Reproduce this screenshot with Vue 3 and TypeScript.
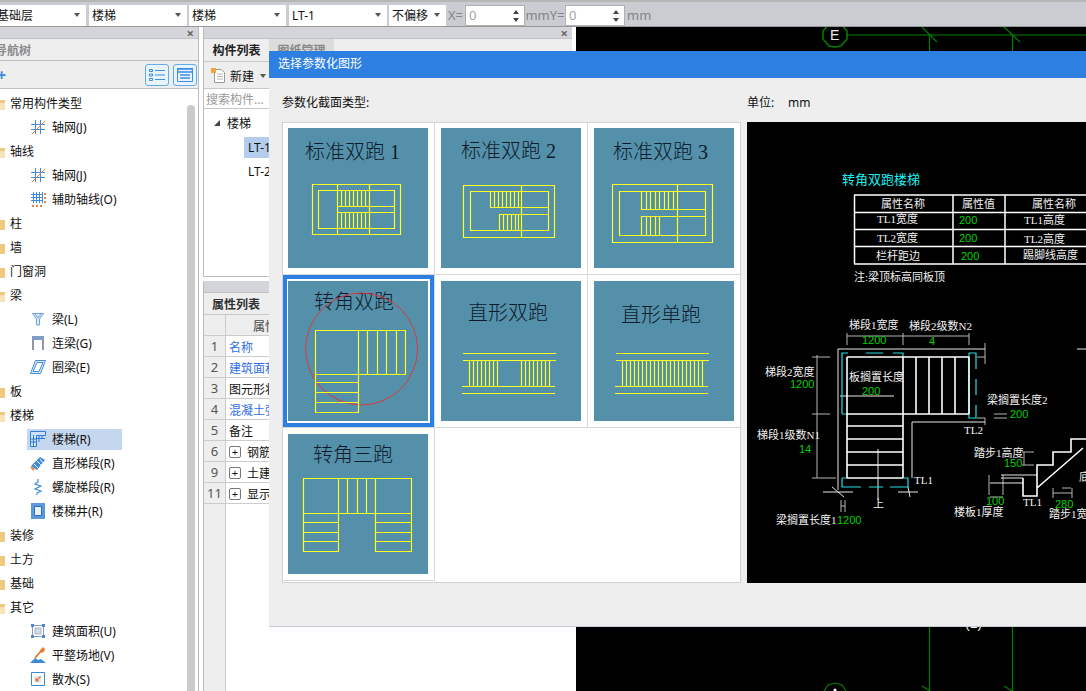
<script setup lang="ts">
interface TreeRow {
  label: string;
  open?: boolean;
  icon?: string;
  active?: boolean;
}

interface PropRow {
  num: number;
  label: string;
  link?: boolean;
  expand?: boolean;
}

interface StairPic {
  title: string;
  x: number;
  y: number;
  d: string;
  circle?: boolean;
}

interface CadText {
  t: string;
  x: number;
  y: number;
  kind?: string;
}

const tree: TreeRow[] = [
  { label: '常用构件类型', open: true },
  { label: '轴网(J)', icon: 'grid' },
  { label: '轴线', open: true },
  { label: '轴网(J)', icon: 'grid' },
  { label: '辅助轴线(O)', icon: 'helper' },
  { label: '柱' },
  { label: '墙' },
  { label: '门窗洞' },
  { label: '梁', open: true },
  { label: '梁(L)', icon: 'beam' },
  { label: '连梁(G)', icon: 'link' },
  { label: '圈梁(E)', icon: 'ring' },
  { label: '板' },
  { label: '楼梯', open: true },
  { label: '楼梯(R)', icon: 'stair', active: true },
  { label: '直形梯段(R)', icon: 'straight' },
  { label: '螺旋梯段(R)', icon: 'spiral' },
  { label: '楼梯井(R)', icon: 'well' },
  { label: '装修' },
  { label: '土方' },
  { label: '基础' },
  { label: '其它', open: true },
  { label: '建筑面积(U)', icon: 'area' },
  { label: '平整场地(V)', icon: 'level' },
  { label: '散水(S)', icon: 'apron' },
];

const props: PropRow[] = [
  { num: 1, label: '名称', link: true },
  { num: 2, label: '建筑面积', link: true },
  { num: 3, label: '图元形状' },
  { num: 4, label: '混凝土强度等级', link: true },
  { num: 5, label: '备注' },
  { num: 6, label: '钢筋业务属性', expand: true },
  { num: 9, label: '土建业务属性', expand: true },
  { num: 11, label: '显示样式', expand: true },
];

const range = (from: number, to: number, step: number) => {
  const out: number[] = [];
  for (let v = from; v <= to + 0.01; v += step) out.push(Math.round(v) + 0.5);
  return out;
};
const vs = (xs: number[], y1: number, y2: number) => xs.map((x) => `M${x} ${y1}V${y2}`).join('');
const hs = (ys: number[], x1: number, x2: number) => ys.map((y) => `M${x1} ${y}H${x2}`).join('');
const box = (x1: number, y1: number, x2: number, y2: number) => `M${x1} ${y1}H${x2}V${y2}H${x1}Z`;

const pics: StairPic[] = [
  {
    title: '标准双跑 1', x: 17, y: 31,
    d: box(24.5, 56.5, 112.5, 106.5) + box(30.5, 62.5, 106.5, 100.5) + vs([49.5, 81.5], 56, 107)
      + hs([78.5, 84.5], 49, 107) + vs(range(53, 78, 4), 62, 79) + vs(range(53, 78, 4), 85, 101),
  },
  {
    title: '标准双跑 2', x: 20, y: 30,
    d: box(22.5, 57.5, 113.5, 109.5) + box(29.5, 63.5, 107.5, 102.5) + vs([80.5], 57, 110)
      + hs([79.5], 49, 107) + hs([86.5], 58, 107) + vs([49.5, 53.5, 57.5, 61.5, 65.5, 69.5, 73.5, 77.5], 63, 80)
      + vs([58.5, 62.5, 66.5, 70.5, 74.5, 77.5], 86, 103),
  },
  {
    title: '标准双跑 3', x: 19, y: 31,
    d: box(18.5, 56.5, 118.5, 114.5) + box(25.5, 63.5, 111.5, 107.5) + vs([83.5], 56, 115)
      + hs([81.5, 88.5], 47, 111) + vs(range(47, 80, 4.5), 63, 82) + vs(range(47, 69, 4.5), 88, 107),
  },
  {
    title: '转角双跑', x: 26, y: 28, circle: true,
    d: box(27.5, 49.5, 117.5, 93.5) + vs([70.5, 79.5, 89.5, 98.5, 108.5], 49, 93)
      + box(27.5, 93.5, 70.5, 131.5) + hs([101.5, 111.5, 121.5], 27, 71),
  },
  {
    title: '直形双跑', x: 27, y: 39,
    d: hs([72.5, 79.5], 22, 115) + hs([105.5, 112.5], 21, 114)
      + vs(range(28, 56, 4), 79, 105) + vs(range(80, 108, 4), 79, 105),
  },
  {
    title: '直形单跑', x: 27, y: 41,
    d: hs([72.5, 79.5], 22, 115) + hs([105.5, 112.5], 21, 114) + vs(range(28, 108, 4), 79, 105),
  },
  {
    title: '转角三跑', x: 25, y: 28,
    d: box(15.5, 44.5, 123.5, 79.5) + vs([50.5, 59.5, 69.5, 78.5, 87.5], 44, 79)
      + box(15.5, 79.5, 50.5, 117.5) + hs([88.5, 98.5, 107.5], 15, 51)
      + box(87.5, 79.5, 123.5, 117.5) + hs([88.5, 98.5, 107.5], 87, 124),
  },
];

const cadWhite = hs([357], 847, 969) + hs([414], 847, 969) + hs([426, 439, 452, 465, 478], 847, 903)
  + vs([847], 357, 478) + vs([903], 357, 478) + vs([916, 929, 942, 955, 969], 357, 414)
  + 'M1023 478V496H1037V465H1053V452H1071V439H1086M1037 488L1083 448';

const cadThin = 'M838 349H985M838 349V490M912 478V422H985M878 449V500M840 396H894'
  + 'M1037 475H1001M1001 478H1023M990 483H1023M1077 349H1086'
  + 'M823 492H853M832 487L844 497M898 492H918M908 487L910 497';

const cadGray = 'M847 336H969M847 333V345M903 333V345M969 333V345'
  + 'M817 355V478M812 357H830M812 414H830M812 478H836'
  + 'M977 357H985M977 418H985M985 343V364M985 418V425M994 414H1007M994 418H1007'
  + 'M989 475V495M1003 475V495M990 497H1003M1062 488H1071M1053 488V498M1072 488V498M1053 493H1072'
  + 'M1022 452H1034M1022 465H1034M1024 452V465M841 500V512M845 500V512M841 506H845';

const cadCyan = 'M842 414V353H848M866 353H883M893 353H903V357M969 353H976V369M976 379V395M976 405V418H969V353'
  + 'M842 414H848M842 478V487H861M869 487H883M890 487H908V478H903M842 478H847';

const cadTexts: CadText[] = [
  { t: '转角双跑楼梯', x: 842, y: 179, kind: 'title' },
  { t: '属性名称', x: 881, y: 204 },
  { t: '属性值', x: 962, y: 204 },
  { t: '属性名称', x: 1032, y: 204 },
  { t: 'TL1宽度', x: 877, y: 219 },
  { t: '200', x: 959, y: 220, kind: 'value' },
  { t: 'TL1高度', x: 1024, y: 220 },
  { t: 'TL2宽度', x: 877, y: 238 },
  { t: '200', x: 959, y: 238, kind: 'value' },
  { t: 'TL2高度', x: 1024, y: 239 },
  { t: '栏杆距边', x: 876, y: 256 },
  { t: '200', x: 961, y: 256, kind: 'value' },
  { t: '踢脚线高度', x: 1023, y: 255 },
  { t: '注:梁顶标高同板顶', x: 854, y: 277 },
  { t: '梯段1宽度', x: 849, y: 325 },
  { t: '梯段2级数N2', x: 909, y: 326 },
  { t: '1200', x: 862, y: 340, kind: 'value' },
  { t: '4', x: 929, y: 341, kind: 'value' },
  { t: '板搁置长度', x: 849, y: 377 },
  { t: '200', x: 862, y: 391, kind: 'value' },
  { t: '梯段2宽度', x: 765, y: 372 },
  { t: '1200', x: 790, y: 384, kind: 'value' },
  { t: '梯段1级数N1', x: 757, y: 435 },
  { t: '14', x: 799, y: 449, kind: 'value' },
  { t: '梁搁置长度2', x: 987, y: 400 },
  { t: '200', x: 1010, y: 414, kind: 'value' },
  { t: 'TL2', x: 964, y: 430 },
  { t: 'TL1', x: 914, y: 480 },
  { t: '上', x: 873, y: 504 },
  { t: '梁搁置长度1', x: 776, y: 520 },
  { t: '1200', x: 837, y: 520, kind: 'value' },
  { t: '踏步1高度', x: 974, y: 453 },
  { t: '150', x: 1004, y: 463, kind: 'value' },
  { t: '100', x: 986, y: 501, kind: 'value' },
  { t: '楼板1厚度', x: 954, y: 512 },
  { t: 'TL1', x: 1023, y: 502 },
  { t: '280', x: 1055, y: 504, kind: 'value' },
  { t: '踏步1宽度', x: 1049, y: 514 },
  { t: '底', x: 1079, y: 477 },
];
</script>

<template>
  <div class="app">
    <!-- 顶部工具条 -->
    <div class="toolbar">
      <div class="select s1"><span class="first-text">基础层</span><i class="caret"></i></div>
      <div class="select s2"><span>楼梯</span><i class="caret"></i></div>
      <div class="select s3"><span>楼梯</span><i class="caret"></i></div>
      <div class="select s4"><span>LT-1</span><i class="caret"></i></div>
      <div class="select s5"><span>不偏移</span><i class="caret"></i></div>
      <span class="muted x-label">X=</span>
      <div class="num-input"><span>0</span><i class="spin"></i></div>
      <span class="muted">mmY=</span>
      <div class="num-input"><span>0</span><i class="spin"></i></div>
      <span class="muted unit-end">mm</span>
    </div>

    <div class="main">
      <!-- 导航树 -->
      <aside class="nav-panel">
        <div class="panel-head"><span class="close">×</span></div>
        <div class="nav-tab"><span>导航树</span></div>
        <div class="nav-tools">
          <span class="plus">+</span>
          <button class="tool-btn" type="button">
            <svg width="16" height="14" viewBox="0 0 16 14" fill="none" stroke="#3d8fe0">
              <path d="M.5 1.5h3v2h-3zM.5 6h3v2h-3zM.5 10.5h3v2h-3zM6 2.5h10M6 7h10M6 11.500h10" />
            </svg>
          </button>
          <button class="tool-btn" type="button">
            <svg width="16" height="14" viewBox="0 0 16 14" fill="none" stroke="#3d8fe0">
              <path d="M.5.500h15v13H.5z" />
              <path d="M.5 1h15v3H.5zM3 7h10M3 10h10" stroke-width="1.500" />
            </svg>
          </button>
        </div>
        <div class="tree">
          <i class="scroll-thumb"></i>
          <div v-for="(row, i) in tree" :key="i" class="tree-row">
            <template v-if="!row.icon">
              <svg class="folder" width="14" height="13" viewBox="0 0 14 13">
                <path d="M0 1h5l1.500 2H14v10H0z" fill="#eec97f" />
                <path v-if="row.open" d="M1 13l3-7h10v7z" fill="#f7e3b6" />
              </svg>
              <span>{{ row.label }}</span>
            </template>
            <div v-else class="leaf" :class="{ active: row.active }">
              <svg class="leaf-icon" width="16" height="16" viewBox="0 0 16 16" fill="none">
                <template v-if="row.icon === 'grid'">
                  <path d="M5.500 1v14M10.500 1v14M1 5.500h14M1 10.500h14" stroke="#3d8ad8" />
                  <path d="M2 15L15 2" stroke="#e8823a" />
                </template>
                <template v-else-if="row.icon === 'helper'">
                  <path d="M3.500 1v11M6.500 1v11M9.500 1v11M12.500 1v11M1 3.500h11M1 6.500h11M1 9.500h11" stroke="#3d8ad8" />
                  <path d="M14 2h2v2h-2zM14 6h2v2h-2zM14 10h2v2h-2zM2 14h2v2H2zM6 14h2v2H6zM10 14h2v2h-2z" fill="#e8823a" />
                </template>
                <template v-else-if="row.icon === 'beam'">
                  <path d="M2.500 2.500h11L9.500 8v6h-3V8z" fill="#dce9f8" stroke="#6da5e2" />
                  <path d="M5 3l3 4 3-4" stroke="#6da5e2" />
                </template>
                <template v-else-if="row.icon === 'link'">
                  <path d="M2 1h12v4H2z" fill="#7e9ec7" />
                  <path d="M2 5h2v10H2zM12 5h2v10h-2z" fill="#8f99a6" />
                </template>
                <template v-else-if="row.icon === 'ring'">
                  <path d="M5.500 1.500h10l-5 13H.5z" fill="#e4effa" stroke="#3d8ad8" />
                  <path d="M7 3.500h6l-4 9H3z" fill="#fff" stroke="#3d8ad8" />
                </template>
                <template v-else-if="row.icon === 'stair'">
                  <path d="M.5.500h15v4h-9v11h-6z" fill="#cfe1f7" stroke="#2f7fd8" />
                  <path d="M3.500 4v11M6 7.500h9M9 5v6M12 5v3M1 8h5M1 11h5" stroke="#2f7fd8" />
                </template>
                <template v-else-if="row.icon === 'straight'">
                  <path d="M1 11l9-9 5 3-8 10z" fill="#3d8ad8" />
                  <path d="M4 9l4 4M7 6l4 4M10 4l3 4" stroke="#fff" />
                  <path d="M1 12l3 3" stroke="#e8823a" stroke-width="2" />
                </template>
                <template v-else-if="row.icon === 'spiral'">
                  <path d="M8 0v3L5 5l6 2-6 3 6 2-4 2v2" stroke="#3d8ad8" stroke-width="1.200" />
                </template>
                <template v-else-if="row.icon === 'well'">
                  <path d="M1 0h14v16H1z" fill="#5c99dc" />
                  <path d="M4.500 3.500h7v9h-7z" fill="#e9f2fb" stroke="#2f6fb8" />
                </template>
                <template v-else-if="row.icon === 'area'">
                  <path d="M2.500 2.500h11v11h-11z" fill="#fff" stroke="#7f9ec9" />
                  <path d="M5 5h6v6H5z" fill="#d6dbe3" stroke="#a9b4c4" />
                  <path d="M1 1h3v3H1zM12 1h3v3h-3zM1 12h3v3H1zM12 12h3v3h-3z" fill="#4f86c9" />
                </template>
                <template v-else-if="row.icon === 'level'">
                  <path d="M0 16l5-5 3 2 3-1 5 4z" fill="#3d8ad8" />
                  <path d="M5 11l6-7" stroke="#d9691f" stroke-width="1.500" />
                  <path d="M10 3l3-3 2 2-1 3-3 1z" fill="#ee7e2d" />
                </template>
                <template v-else-if="row.icon === 'apron'">
                  <path d="M1.500 1.500h13v13h-13z" fill="#fff" stroke="#3d8ad8" />
                  <path d="M4.500 4.500h7v7h-7z" fill="#dbe8f6" />
                  <path d="M10.500 5.500L6.500 9.500M6 7v3h3" stroke="#e8702a" stroke-width="1.200" />
                </template>
              </svg>
              <span>{{ row.label }}</span>
            </div>
          </div>
        </div>
      </aside>

      <!-- 构件列表 + 属性列表 -->
      <section class="mid">
        <div class="mid-top">
          <div class="panel-head"><span class="close">×</span></div>
          <div class="mid-tabs">
            <span class="mid-tab on">构件列表</span>
            <span class="mid-tab">图纸管理</span>
          </div>
          <div class="mid-tools">
            <svg width="14" height="15" viewBox="0 0 14 15" fill="none">
              <path d="M3.500 1.500h7l3 3v10h-10z" fill="#fff" stroke="#9a9a9a" />
              <path d="M6 6h6M6 8.500h6M6 11h6" stroke="#b5b5b5" />
              <path d="M0 0h5v5H0z" fill="#f0a63c" />
            </svg>
            <span class="new-text">新建</span>
            <i class="caret"></i>
          </div>
          <div class="search">搜索构件...</div>
          <div class="part-tree">
            <div class="part-root"><i class="tri"></i>楼梯</div>
            <div class="part-row"><span class="part-name on">LT-1</span></div>
            <div class="part-row"><span class="part-name">LT-2</span></div>
          </div>
        </div>
        <div class="mid-bottom">
          <div class="panel-head"></div>
          <div class="prop-tab"><span>属性列表</span></div>
          <div class="prop-row prop-header"><div class="num"></div><div class="prop-label head-label">属性名称</div></div>
          <div v-for="p in props" :key="p.num" class="prop-row">
            <div class="num">{{ p.num }}</div>
            <div class="prop-label" :class="{ link: p.link }">
              <i v-if="p.expand" class="expand">+</i>{{ p.label }}
            </div>
          </div>
          <div class="prop-row filler"><div class="num"></div></div>
        </div>
      </section>

      <!-- CAD 画布 -->
      <div class="canvas">
        <svg width="510" height="664" viewBox="576 27 510 664" fill="none">
          <path
            d="M829 24L841 24L847 31V39L841 46L835 47L829 46L823 39V31Z"
            stroke="#008000"
            stroke-width="1.500"
          />
          <path
            d="M847 35H1086M922 27L937 42M1004 27L1020 42M929.500 35V51M1012.500 35V51M929.500 627V691M1012.500 627V691M922 686L930 691M1004 686L1012 691M824 691L828 685L835 683L842 685L846 691"
            stroke="#008000"
            stroke-width="1.200"
          />
          <circle cx="835" cy="690" r="1.500" fill="#fff" />
          <text class="axis" x="830" y="40">E</text>
          <text class="axis" x="965" y="628">(1)</text>
        </svg>
      </div>
    </div>

    <!-- 选择参数化图形 弹窗 -->
    <div class="modal">
      <div class="modal-title">选择参数化图形</div>
      <div class="modal-body">
        <div class="modal-left">
          <div class="field-label">参数化截面类型:</div>
          <div class="pic-grid">
            <div v-for="(pic, i) in pics" :key="pic.title" class="pic-cell" :class="{ selected: i === 3 }">
              <svg class="pic" width="140" height="140" viewBox="0 0 140 140" fill="none">
                <text class="pic-title" :x="pic.x" :y="pic.y">{{ pic.title }}</text>
                <circle v-if="pic.circle" cx="73.500" cy="68" r="56" stroke="#d8393e" />
                <path :d="pic.d" stroke="#ffff22" stroke-width="1.150" />
              </svg>
            </div>
          </div>
        </div>
        <div class="modal-right">
          <div class="field-label unit"><span>单位:</span><span>mm</span></div>
          <svg class="cad" width="339" height="461" viewBox="747 122 339 461" fill="none">
            <path d="M854 195H1086M854 212.500H1086M854 229.500H1086M854 246.500H1086M854 264H1086M854.500 195V264M953 195V264M1005 195V264" stroke="#fff" stroke-width="1.500" />
            <path :d="cadGray" stroke="#b5b5b5" />
            <path :d="cadThin" stroke="#e8e8e8" />
            <path :d="cadCyan" stroke="#1fe0e6" stroke-width="1.200" />
            <path :d="cadWhite" stroke="#fff" stroke-width="1.600" />
            <text
              v-for="(item, i) in cadTexts"
              :key="i"
              class="cad-text"
              :class="item.kind"
              :x="item.x"
              :y="item.y"
            >{{ item.t }}</text>
          </svg>
        </div>
      </div>
    </div>
  </div>
</template>

<style scoped>
.app {
  position: relative;
  width: 1086px;
  height: 691px;
  overflow: hidden;
  display: flex;
  flex-direction: column;
  background: #fff;
  color: #111;
  font-family: "Noto Sans", "Noto Sans CJK SC", sans-serif;
  font-size: 12px;
}

.toolbar {
  flex: none;
  height: 27px;
  box-sizing: border-box;
  display: flex;
  align-items: center;
  padding-top: 2px;
  background: #c9ccd1;
  border-top: 2px solid #b6b6b6;
  border-bottom: 1px solid #989898;
  overflow: hidden;
}

.select {
  box-sizing: border-box;
  height: 21px;
  display: flex;
  align-items: center;
  justify-content: space-between;
  padding: 0 6px 0 3px;
  background: #fff;
  overflow: hidden;
  white-space: nowrap;
}

.s1 { width: 86px; margin-right: 3px; padding-left: 0; }
.s2 { width: 98px; margin-right: 2px; }
.s3 { width: 97px; margin-right: 3px; }
.s4 { width: 98px; margin-right: 2px; }
.s5 { width: 57px; }

.first-text {
  margin-left: -3px;
}

.caret {
  width: 0;
  height: 0;
  border-left: 3.500px solid transparent;
  border-right: 3.500px solid transparent;
  border-top: 4px solid #555;
}

.muted {
  color: #858585;
  font-size: 13px;
  white-space: nowrap;
  width: 40px;
  text-align: center;
  flex: none;
}

.x-label {
  width: 19px;
}

.unit-end {
  width: auto;
  margin-left: 2px;
}

.num-input {
  box-sizing: border-box;
  width: 60px;
  height: 21px;
  flex: none;
  display: flex;
  align-items: center;
  justify-content: space-between;
  padding: 0 4px 0 3px;
  background: #fff;
  border: 1px solid #b0b0b0;
  color: #a5a5a5;
  font-size: 13px;
}

.spin {
  position: relative;
  width: 7px;
  height: 15px;
}

.spin::before,
.spin::after {
  content: "";
  position: absolute;
  left: 0;
  width: 0;
  height: 0;
  border-left: 3.500px solid transparent;
  border-right: 3.500px solid transparent;
}

.spin::before {
  top: 2px;
  border-bottom: 4px solid #444;
}

.spin::after {
  bottom: 1px;
  border-top: 4px solid #444;
}

.main {
  flex: 1;
  min-height: 0;
  display: flex;
}

.panel-head {
  flex: none;
  box-sizing: border-box;
  height: 12px;
  display: flex;
  justify-content: flex-end;
  align-items: center;
  padding-right: 4px;
  background: #d3d5da;
  border-bottom: 1px solid #c0c2c6;
}

.close {
  color: #666;
  font-size: 13px;
  font-weight: 700;
  line-height: 12px;
}

.nav-panel {
  flex: none;
  box-sizing: border-box;
  width: 199px;
  margin-right: 4px;
  display: flex;
  flex-direction: column;
  border-right: 1px solid #bcbcbc;
  overflow: hidden;
}

.nav-tab {
  flex: none;
  box-sizing: border-box;
  height: 22px;
  display: flex;
  align-items: center;
  background: #eee;
  border-bottom: 1px solid #c0c0c0;
  color: #8a8a8a;
  font-weight: 700;
}

.nav-tab span {
  margin-left: -5px;
}

.nav-tools {
  flex: none;
  box-sizing: border-box;
  height: 28px;
  display: flex;
  align-items: center;
  background: #eee;
  border-bottom: 1px solid #c0c0c0;
  padding-right: 1px;
}

.plus {
  margin-left: -3px;
  margin-right: auto;
  color: #3d8ad8;
  font-size: 16px;
  font-weight: 700;
}

.tool-btn {
  box-sizing: border-box;
  width: 24px;
  height: 22px;
  margin-left: 4px;
  padding: 0;
  display: flex;
  align-items: center;
  justify-content: center;
  background: #e9f3fc;
  border: 1px solid #62ace8;
  border-radius: 3px;
}

.tree {
  position: relative;
  flex: 1;
  min-height: 0;
  padding-top: 2px;
  overflow: hidden;
  background: #fff;
}

.scroll-thumb {
  position: absolute;
  top: 16px;
  bottom: 0;
  right: 3px;
  width: 8px;
  border-radius: 4px 4px 0 0;
  background: #cbcbcb;
}

.tree-row {
  height: 24px;
  display: flex;
  align-items: center;
  white-space: nowrap;
}

.folder {
  flex: none;
  margin-left: -9px;
  margin-right: 5px;
}

.leaf {
  box-sizing: border-box;
  width: 95px;
  height: 21px;
  margin-left: 27px;
  padding-left: 3px;
  display: flex;
  align-items: center;
  gap: 6px;
}

.leaf.active {
  background: #c5d7ee;
}

.leaf-icon {
  flex: none;
}

.mid {
  flex: none;
  width: 369px;
  margin-right: 4px;
  display: flex;
  flex-direction: column;
}

.mid-top {
  flex: none;
  box-sizing: border-box;
  height: 250px;
  display: flex;
  flex-direction: column;
  border-left: 1px solid #bcbcbc;
  border-bottom: 1px solid #bcbcbc;
}

.mid-tabs {
  flex: none;
  box-sizing: border-box;
  height: 23px;
  display: flex;
  align-items: flex-end;
  background: #eee;
  border-bottom: 1px solid #c8c8c8;
}

.mid-tab {
  box-sizing: border-box;
  width: 65px;
  height: 22px;
  display: flex;
  align-items: center;
  justify-content: center;
  background: #dcdcdc;
  color: #8a8a8a;
  font-weight: 700;
}

.mid-tab.on {
  background: #eee;
  color: #222;
}

.mid-tools {
  flex: none;
  box-sizing: border-box;
  height: 27px;
  display: flex;
  align-items: center;
  padding-left: 7px;
  padding-top: 1px;
  background: #eee;
  border-bottom: 1px solid #c8c8c8;
}

.new-text {
  margin: 0 6px 0 5px;
}

.search {
  flex: none;
  box-sizing: border-box;
  height: 20px;
  padding-left: 2px;
  line-height: 22px;
  color: #9a9a9a;
  border-bottom: 1px solid #c8c8c8;
}

.part-tree {
  padding-top: 2px;
}

.part-root {
  position: relative;
  height: 24px;
  line-height: 26px;
  padding-left: 23px;
}

.tri {
  position: absolute;
  left: 10px;
  top: 9px;
  width: 0;
  height: 0;
  border-left: 6px solid transparent;
  border-bottom: 6px solid #444;
}

.part-row {
  height: 24px;
  display: flex;
  align-items: center;
  padding-left: 40px;
}

.part-name {
  flex: 1;
  height: 21px;
  line-height: 21px;
  padding-left: 4px;
}

.part-name.on {
  background: #b5cdec;
}

.mid-bottom {
  flex: 1;
  min-height: 0;
  margin-top: 4px;
  display: flex;
  flex-direction: column;
  border-left: 1px solid #bcbcbc;
}

.prop-tab {
  flex: none;
  box-sizing: border-box;
  height: 22px;
  display: flex;
  background: #eee;
  border-bottom: 1px solid #c8c8c8;
}

.prop-tab span {
  width: 64px;
  text-align: center;
  line-height: 23px;
  font-weight: 700;
  color: #333;
}

.prop-row {
  flex: none;
  box-sizing: border-box;
  height: 21px;
  display: flex;
  border-bottom: 1px solid #ccc;
}

.prop-row.filler {
  flex: 1;
  border-bottom: 0;
}

.num {
  flex: none;
  box-sizing: border-box;
  width: 22px;
  text-align: center;
  line-height: 21px;
  font-size: 13px;
  color: #555;
  background: #eee;
  border-right: 1px solid #ccc;
}

.prop-label {
  flex: 1;
  display: flex;
  align-items: center;
  padding-left: 3px;
  padding-top: 1px;
  white-space: nowrap;
}

.prop-header {
  background: #eee;
}

.head-label {
  padding-left: 27px;
  color: #444;
}

.link {
  color: #2f6ee6;
}

.expand {
  box-sizing: border-box;
  width: 12px;
  height: 12px;
  margin-right: 6px;
  display: flex;
  align-items: center;
  justify-content: center;
  border: 1px solid #777;
  border-radius: 2px;
  font-style: normal;
  font-size: 11px;
  line-height: 1;
}

.canvas {
  flex: none;
  width: 510px;
  background: #000;
}

.canvas svg {
  display: block;
}

.axis {
  fill: #eee;
  font-family: "Liberation Sans", sans-serif;
  font-size: 14px;
}

.modal {
  position: absolute;
  left: 269px;
  top: 51px;
  width: 817px;
  height: 576px;
  box-sizing: border-box;
  display: flex;
  flex-direction: column;
  background: #eee;
  border-bottom: 1px solid #c5cad8;
}

.modal-title {
  flex: none;
  height: 27px;
  padding-left: 9px;
  line-height: 26px;
  background: #2e7fe2;
  color: #fff;
}

.modal-body {
  display: flex;
  padding: 16px 0 0 13px;
  gap: 6px;
}

.field-label {
  height: 18px;
  margin-bottom: 10px;
  line-height: 18px;
}

.unit {
  display: flex;
  gap: 11px;
}

.unit span:first-child {
  width: 30px;
}

.modal-left {
  flex: none;
  width: 459px;
}

.pic-grid {
  box-sizing: border-box;
  width: 459px;
  height: 461px;
  display: grid;
  grid-template-columns: 152px 153px 152px;
  grid-template-rows: 152px 153px 153px;
  background: #fff;
  border: 1px solid #d2d2d2;
}

.pic-cell {
  box-sizing: border-box;
  padding: 6px 0 0 6px;
  border-right: 1px solid #d8d8d8;
  border-bottom: 1px solid #d8d8d8;
}

.pic-cell:nth-child(3n + 1) {
  padding-left: 5px;
}

.pic-cell:nth-child(-n + 3) {
  padding-top: 5px;
}

.pic-cell:nth-child(3n) {
  border-right: 0;
}

.pic-cell.selected {
  box-shadow: inset 0 0 0 4px #2e7fe2;
}

.pic {
  display: block;
  background: #5590aa;
}

.pic-title {
  fill: #0c1c2c;
  font-family: "Liberation Serif", "Noto Sans CJK SC", serif;
  font-size: 20px;
  font-weight: 300;
}

.modal-right {
  flex: none;
  width: 339px;
}

.cad {
  display: block;
  background: #000;
}

.cad-text {
  fill: #f2f2f2;
  font-family: "Liberation Serif", "Noto Sans CJK SC", serif;
  font-size: 11px;
  dominant-baseline: central;
}

.cad-text.title {
  fill: #19f0f0;
  font-size: 13px;
}

.cad-text.value {
  fill: #00d000;
  font-family: "Liberation Sans", sans-serif;
}
</style>
